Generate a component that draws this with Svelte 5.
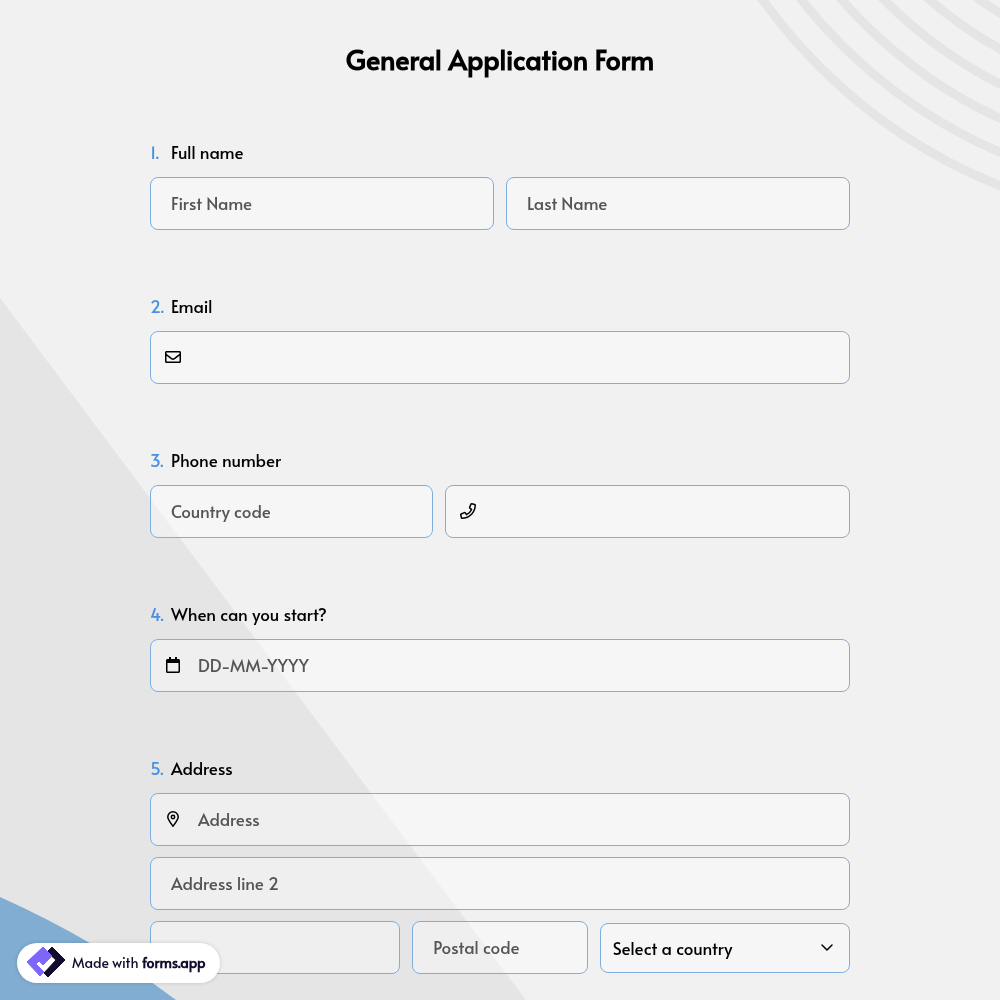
<script>
	let form = $state({
		firstName: '',
		lastName: '',
		email: '',
		countryCode: '',
		phone: '',
		startDate: '',
		address: '',
		address2: '',
		city: '',
		postalCode: '',
		country: ''
	});

	const rings = [541, 510, 479, 448, 417, 386];
	const countries = ['Canada', 'Germany', 'Türkiye', 'United Kingdom', 'United States'];
</script>

<svg class="backdrop" viewBox="0 0 1000 1000" preserveAspectRatio="xMidYMid slice" aria-hidden="true">
	<path d="M0 298 L526 1000 H0 Z" fill="#e5e5e5" />
	<path d="M0 897 Q96 940 176 1000 H0 Z" fill="#80add1" />
	<g fill="none" stroke="#e5e5e5" stroke-width="9">
		{#each rings as r}
			<circle cx="1202" cy="-316" {r} />
		{/each}
	</g>
</svg>

<main>
	<h1>General Application Form</h1>

	<form>
		<div class="question">
			<label for="first-name"><span class="number">1.</span>Full name</label>
			<div class="row">
				<input id="first-name" class="field" type="text" placeholder="First Name" bind:value={form.firstName}>
				<input class="field" type="text" placeholder="Last Name" aria-label="Last Name" bind:value={form.lastName}>
			</div>
		</div>

		<div class="question">
			<label for="email"><span class="number">2.</span>Email</label>
			<div class="field with-icon">
				<svg class="icon" viewBox="0 0 512 512" aria-hidden="true">
					<path d="M464 64H48C21.500 64 0 85.500 0 112v288c0 26.500 21.500 48 48 48h416c26.500 0 48-21.500 48-48V112c0-26.500-21.500-48-48-48zm0 48v40.800c-22.400 18.300-58.200 46.700-134.600 106.500-16.800 13.200-50.200 45-73.400 44.700-23.200.4-56.600-31.500-73.400-44.700C106.200 199.500 70.400 171.100 48 152.800V112h416zM48 400V214.400c22.900 18.300 55.400 43.900 104.900 82.600 21.900 17.200 60.200 55.200 103.100 55 42.700.2 80.500-37.200 103-55 49.600-38.700 82.100-64.300 105-82.600V400H48z" />
				</svg>
				<input id="email" type="email" bind:value={form.email}>
			</div>
		</div>

		<div class="question">
			<label for="country-code"><span class="number">3.</span>Phone number</label>
			<div class="row phone">
				<input id="country-code" class="field" type="text" placeholder="Country code" bind:value={form.countryCode}>
				<div class="field with-icon">
					<svg class="icon" viewBox="0 0 512 512" aria-hidden="true">
						<path d="M476.500 22.900L382.300 1.200c-21.600-5-43.600 6.200-52.300 26.600l-43.500 101.500c-8 18.600-2.600 40.600 13.100 53.400l40 32.700C311 267.800 267.800 311 215.400 339.500l-32.700-40c-12.800-15.700-34.800-21.100-53.400-13.100L27.700 329.900c-20.400 8.700-31.500 30.700-26.600 52.300l21.700 94.200c4.800 20.900 23.200 35.500 44.600 35.500C312.300 512 512 313.700 512 67.500c0-21.400-14.600-39.800-35.500-44.600zM69.300 464l-20.900-90.700 98.200-42.100 55.700 68.100c98.800-46.400 150.600-98 197-197l-68.100-55.700 42.100-98.200L464 69.300C463 286.900 286.900 463 69.300 464z" />
					</svg>
					<input type="tel" aria-label="Phone number" bind:value={form.phone}>
				</div>
			</div>
		</div>

		<div class="question">
			<label for="start-date"><span class="number">4.</span>When can you start?</label>
			<div class="field with-icon">
				<svg class="icon" viewBox="-32 0 512 512" aria-hidden="true">
					<path d="M400 64h-48V12c0-6.600-5.400-12-12-12h-40c-6.600 0-12 5.400-12 12v52H160V12c0-6.600-5.400-12-12-12h-40c-6.600 0-12 5.400-12 12v52H48C21.500 64 0 85.500 0 112v352c0 26.500 21.500 48 48 48h352c26.500 0 48-21.500 48-48V112c0-26.500-21.500-48-48-48zm-6 400H54c-3.300 0-6-2.700-6-6V192h352v266c0 3.300-2.700 6-6 6z" />
				</svg>
				<input id="start-date" type="text" placeholder="DD-MM-YYYY" bind:value={form.startDate}>
			</div>
		</div>

		<div class="question">
			<label for="address"><span class="number">5.</span>Address</label>
			<div class="stack">
				<div class="field with-icon">
					<svg class="icon outline" viewBox="-2 0 16 16" aria-hidden="true">
						<path d="M6 15.200C4.600 13.200.8 8.800.8 6a5.200 5.200 0 0 1 10.400 0c0 2.800-3.800 7.200-5.200 9.200z" />
						<circle cx="6" cy="6" r="1.700" />
					</svg>
					<input id="address" type="text" placeholder="Address" bind:value={form.address}>
				</div>
				<input class="field" type="text" placeholder="Address line 2" aria-label="Address line 2" bind:value={form.address2}>
				<div class="row city">
					<input class="field" type="text" aria-label="City" bind:value={form.city}>
					<input class="field" type="text" placeholder="Postal code" aria-label="Postal code" bind:value={form.postalCode}>
					<div class="select">
						<select aria-label="Country" bind:value={form.country}>
							<option value="">Select a country</option>
							{#each countries as country}
								<option value={country}>{country}</option>
							{/each}
						</select>
						<svg class="chevron" viewBox="0 0 12 8" aria-hidden="true">
							<path d="M1 1 L6 6 L11 1" />
						</svg>
					</div>
				</div>
			</div>
		</div>
	</form>
</main>

<a class="badge" href="#forms-app">
	<svg viewBox="0 0 40 32" aria-hidden="true">
		<path d="M26 1 L39 14 L22 31 L18 27 L30 14 L21 6 Z" fill="#110d2c" stroke="#110d2c" stroke-linejoin="round" />
		<path d="M17 1 L1 16 L14 30 L18 26 L10 18 L13 15 L17 19 L26 10 Z" fill="#7f66fb" stroke="#7f66fb" stroke-linejoin="round" />
	</svg>
	<span>Made with <strong>forms.app</strong></span>
</a>

<style>
	:global(body) {
		background: #f1f1f1;
		color: #000;
		font-family: Alata, Lato, sans-serif;
		font-size: 17px;
		margin: 0;
	}

	.backdrop {
		height: 100%;
		left: 0;
		position: fixed;
		top: 0;
		width: 100%;
		z-index: -1;
	}

	main {
		box-sizing: border-box;
		margin: 0 auto;
		max-width: 740px;
		padding: 41px 20px 24px;
	}

	h1 {
		font-size: 27px;
		font-weight: 700;
		line-height: 36px;
		margin: 0 0 63px;
		text-align: center;
	}

	form {
		display: flex;
		flex-direction: column;
		gap: 64px;
	}

	.question {
		display: flex;
		flex-direction: column;
		gap: 13px;
	}

	label {
		display: flex;
		font-weight: 500;
		line-height: 24px;
	}

	.number {
		color: #4a90e2;
		width: 21px;
	}

	.row {
		align-items: center;
		display: grid;
		gap: 12px;
		grid-template-columns: 1fr 1fr;
	}

	.phone {
		grid-template-columns: 7fr 10fr;
	}

	.city {
		grid-template-columns: 10fr 7fr 10fr;
	}

	.stack {
		display: flex;
		flex-direction: column;
		gap: 11px;
	}

	input,
	select {
		background: none;
		border: none;
		color: #000;
		font: inherit;
		min-width: 0;
		outline: none;
		padding: 0;
		width: 100%;
	}

	input::placeholder {
		color: #555;
		opacity: 1;
	}

	.field {
		background: rgba(255, 255, 255, 0.4);
		border: 1px solid #7fadde;
		border-radius: 8px;
		box-sizing: border-box;
		height: 53px;
		padding: 0 20px 2px;
	}

	.field:focus,
	.field:focus-within {
		border-color: #4a90e2;
	}

	.with-icon {
		align-items: center;
		display: flex;
		gap: 17px;
		padding: 0 14px 2px;
	}

	.icon {
		flex: none;
		height: 16px;
		width: 16px;
	}

	.outline {
		fill: none;
		stroke: #000;
		stroke-width: 1.5;
	}

	.select {
		background: rgba(255, 255, 255, 0.4);
		border: 1px solid #7fadde;
		border-radius: 8px;
		box-sizing: border-box;
		display: grid;
		height: 50px;
	}

	.select > * {
		grid-area: 1 / 1;
	}

	select {
		appearance: none;
		cursor: pointer;
		font-weight: 500;
		padding: 0 36px 0 12px;
	}

	.chevron {
		align-self: center;
		fill: none;
		height: 8px;
		justify-self: end;
		margin-right: 16px;
		pointer-events: none;
		stroke: #000;
		stroke-linecap: round;
		stroke-linejoin: round;
		stroke-width: 1.5;
		width: 12px;
	}

	.badge {
		align-items: center;
		background: #fff;
		border-radius: 20px;
		bottom: 17px;
		box-shadow: 0 0 4px rgba(0, 0, 0, 0.15);
		box-sizing: border-box;
		color: #110d2c;
		display: flex;
		font-size: 14px;
		gap: 6px;
		height: 40px;
		left: 17px;
		padding: 0 14px 2px 9px;
		position: fixed;
		text-decoration: none;
	}

	.badge svg {
		height: 32px;
		width: 40px;
	}
</style>
